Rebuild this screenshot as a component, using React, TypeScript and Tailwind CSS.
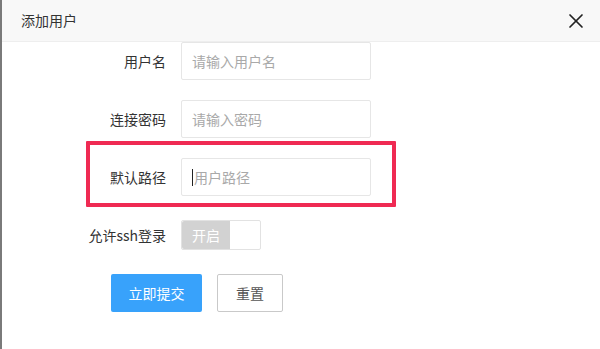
import { X } from "lucide-react";

const font = { fontFamily: '"Noto Sans CJK SC", "Noto Sans", sans-serif' };

const fields = [
  { label: "用户名", placeholder: "请输入用户名" },
  { label: "连接密码", placeholder: "请输入密码" },
  { label: "默认路径", placeholder: "用户路径", focused: true },
];

const App = () => {
  return (
    <div
      className="w-[600px] h-[349px] bg-white border-l-2 border-[#7a7a7a] overflow-hidden relative text-[14px] text-[#333]"
      style={font}
    >
      <div className="h-[42px] bg-[#f8f8f8] border-b border-[#eee] flex items-center justify-between pl-[19px] pr-[12px]">
        <span className="text-[14px] text-[#333]">添加用户</span>
        <X className="w-[24px] h-[24px] text-[#222]" strokeWidth={1.7} />
      </div>

      <div className="flex flex-col">
        {fields.map((f, i) => (
          <div key={f.label} className={`flex items-center ${i === 0 ? "mt-0" : "mt-[20px]"}`}>
            <label className="w-[179px] pr-[15px] text-right leading-[38px]">{f.label}</label>
            <div className="relative w-[190px] h-[38px] border border-[#e6e6e6] rounded-[2px] flex items-center pl-[10px]">
              {f.focused && <span className="w-px h-[17px] bg-[#222] mr-[1px]" />}
              <span className="text-[#a9a9a9]">{f.placeholder}</span>
            </div>
          </div>
        ))}

        <div className="flex items-center mt-[24px]">
          <label className="w-[179px] pr-[15px] text-right leading-[30px]">允许ssh登录</label>
          <div className="w-[80px] h-[30px] border border-[#e2e2e2] rounded-[2px] flex">
            <div className="w-[48px] h-full bg-[#d2d2d2] text-white flex items-center justify-center rounded-l-[2px]">
              开启
            </div>
          </div>
        </div>

        <div className="flex items-center mt-[24px] pl-[109px] gap-[15px]">
          <button className="w-[91px] h-[38px] bg-[#38a2fb] text-white rounded-[2px]">立即提交</button>
          <button className="w-[66px] h-[38px] border border-[#c9c9c9] text-[#555] rounded-[2px] bg-white">重置</button>
        </div>
      </div>

      <div className="absolute left-[84px] top-[141px] w-[310px] h-[66px] border-[4px] border-[#ef2a53] rounded-[1px] pointer-events-none" />
    </div>
  );
};

export default App;
